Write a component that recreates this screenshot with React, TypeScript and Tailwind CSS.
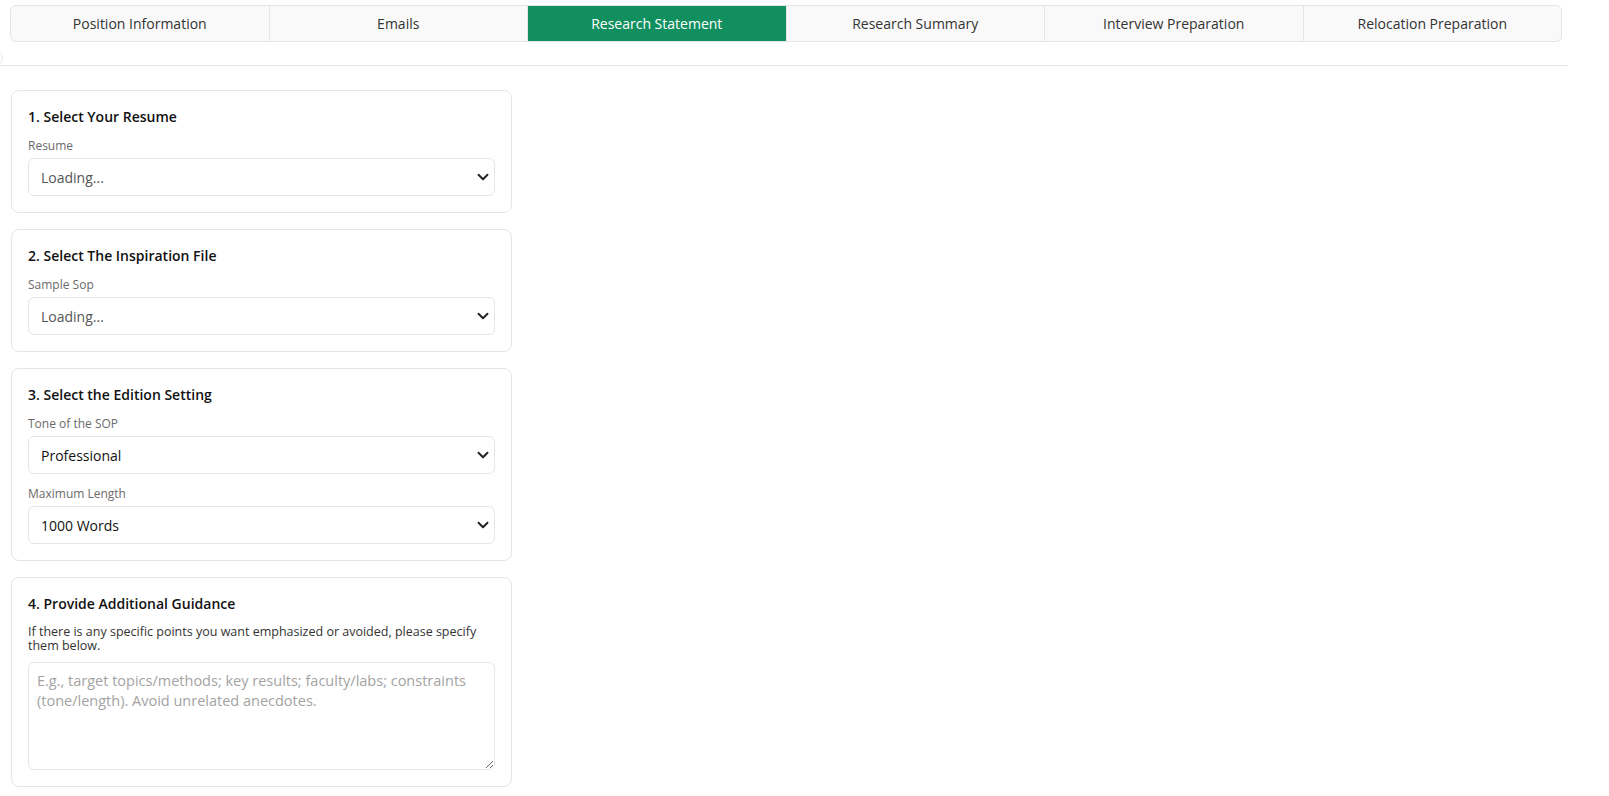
import { ChevronDown } from "lucide-react";

const tabs = [
  "Position Information",
  "Emails",
  "Research Statement",
  "Research Summary",
  "Interview Preparation",
  "Relocation Preparation",
];

const font = { fontFamily: '"Open Sans", "Noto Sans", sans-serif' };

function SelectBox({ value, muted }: { value: string; muted?: boolean }) {
  return (
    <div className="flex h-[38px] items-center justify-between rounded-md border border-[#e6e6e6] bg-white pl-3 pr-[2px]">
      <span className={`text-[14px] ${muted ? "text-[#555]" : "text-[#111]"}`}>{value}</span>
      <ChevronDown className="h-[18px] w-[18px] text-[#222]" strokeWidth={2.6} />
    </div>
  );
}

function Field({ label, value, muted }: { label: string; value: string; muted?: boolean }) {
  return (
    <div className="flex flex-col gap-1">
      <span className="text-[12px] leading-4 text-[#6b6b6b]">{label}</span>
      <SelectBox value={value} muted={muted} />
    </div>
  );
}

function Card({ title, children }: { title: string; children: React.ReactNode }) {
  return (
    <div className="rounded-lg border border-[#e5e5e5] bg-white p-4">
      <h3 className="mb-[11px] text-[14px] leading-5 font-semibold text-[#111]">{title}</h3>
      {children}
    </div>
  );
}

export default function App() {
  return (
    <div className="relative min-h-[796px] w-[1568px] overflow-hidden bg-white" style={font}>
      <div className="pl-[10px] pr-[6px] pt-[5px]">
        <div className="flex h-[37px] overflow-hidden rounded-md border border-[#e5e5e5] bg-[#f9f9f9]">
          {tabs.map((tab, i) => (
            <div
              key={tab}
              className={`flex flex-1 items-center justify-center text-[14px] ${
                i > 0 ? "border-l border-[#e5e5e5]" : ""
              } ${i === 2 ? "bg-[#118f5f] text-white" : "text-[#333]"}`}
            >
              {tab}
            </div>
          ))}
        </div>
      </div>
      <div className="h-[24px] border-b border-[#e5e5e5]" />
      <div className="absolute left-[-13px] top-[50px] h-4 w-4 rounded-full border border-[#e5e5e5]" />

      <div className="flex w-[512px] flex-col gap-4 pl-[11px] pt-[24px]">
        <Card title="1. Select Your Resume">
          <Field label="Resume" value="Loading..." muted />
        </Card>
        <Card title="2. Select The Inspiration File">
          <Field label="Sample Sop" value="Loading..." muted />
        </Card>
        <Card title="3. Select the Edition Setting">
          <div className="flex flex-col gap-3">
            <Field label="Tone of the SOP" value="Professional" />
            <Field label="Maximum Length" value="1000 Words" />
          </div>
        </Card>
        <Card title="4. Provide Additional Guidance">
          <p className="mb-[9px] text-[12.5px] leading-[14px] text-[#333]">
            If there is any specific points you want emphasized or avoided, please specify them below.
          </p>
          <textarea
            className="block h-[108px] w-full rounded-md border border-[#e6e6e6] px-2 py-2 text-[14.5px] leading-5 text-[#111] outline-none placeholder:text-[#a3a3a3]"
            style={font}
            placeholder="E.g., target topics/methods; key results; faculty/labs; constraints (tone/length). Avoid unrelated anecdotes."
          />
        </Card>
      </div>
    </div>
  );
}
